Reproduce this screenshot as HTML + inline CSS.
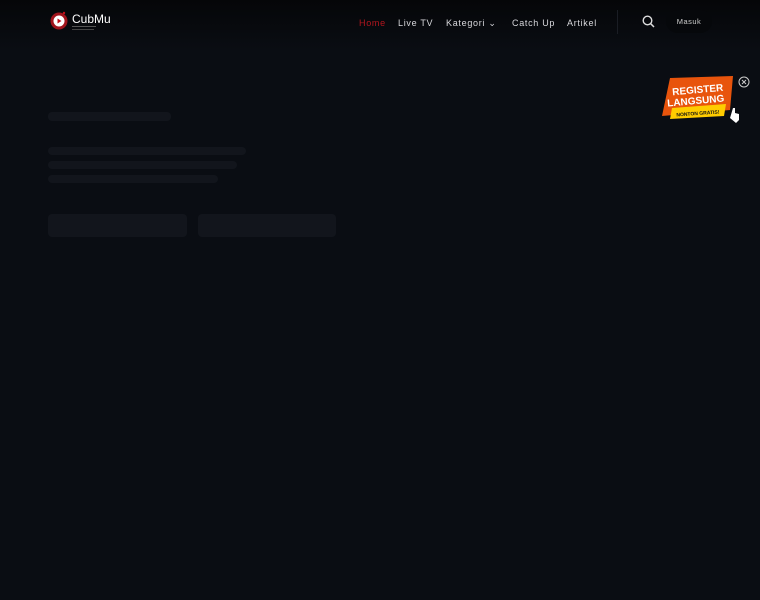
<!DOCTYPE html>
<html><head><meta charset="utf-8"><style>
*{margin:0;padding:0;box-sizing:border-box}
body{width:760px;height:600px;background:#0a0d13;font-family:"Liberation Sans",sans-serif;position:relative;overflow:hidden}
.hdr{position:absolute;left:0;top:0;width:760px;height:50px;background:linear-gradient(#050608,#0a0d13)}
.nav{position:absolute;top:18px;font-size:9px;letter-spacing:.7px;color:#d8d8dc}
.b{position:absolute;background:#12151c;border-radius:4px}
</style></head><body>
<div class="hdr"></div>
<svg style="position:absolute;left:49px;top:10px" width="20" height="20" viewBox="0 0 20 20"><circle cx="10" cy="11" r="8.5" fill="#a0141c"/><circle cx="10" cy="11" r="5.5" fill="#fff"/><path d="M8.5 8.5v5l4-2.5z" fill="#c0101a"/><circle cx="15" cy="3" r="1.2" fill="#c0101a"/></svg>
<div style="position:absolute;left:72px;top:12px;color:#fff;font-size:12px">CubMu</div>
<div style="position:absolute;left:72px;top:26px;width:24px;height:1px;background:#555"></div>
<div style="position:absolute;left:72px;top:29px;width:22px;height:1px;background:#444"></div>
<div class="nav" style="left:359px;color:#b5161e">Home</div>
<div class="nav" style="left:398px">Live TV</div>
<div class="nav" style="left:446px">Kategori ⌄</div>
<div class="nav" style="left:512px">Catch Up</div>
<div class="nav" style="left:567px">Artikel</div>
<div style="position:absolute;left:617px;top:10px;width:1px;height:24px;background:#1a1d24"></div>
<svg style="position:absolute;left:642px;top:15px" width="13" height="13" viewBox="0 0 13 13"><circle cx="5.5" cy="5.5" r="4.3" stroke="#ddd" stroke-width="1.4" fill="none"/><path d="M8.7 8.7L12 12" stroke="#ddd" stroke-width="1.5"/></svg>
<div style="position:absolute;left:666px;top:10px;width:46px;height:23px;border-radius:12px;background:#06080b;color:#ccc;font-size:7.5px;text-align:center;line-height:23px;letter-spacing:.5px">Masuk</div>
<svg style="position:absolute;left:660px;top:74px" width="92" height="52" viewBox="0 0 92 52">
<polygon points="10,4 73,2 70,36 2,42" fill="#e8540c"/>
<polygon points="12,34 66,30 64,42 10,45" fill="#ffcc00"/>
<text x="38" y="19" text-anchor="middle" font-family="Liberation Sans" font-weight="bold" font-size="10" fill="#fff" transform="rotate(-5 38 19)">REGISTER</text>
<text x="36" y="30" text-anchor="middle" font-family="Liberation Sans" font-weight="bold" font-size="10" fill="#fff" transform="rotate(-5 36 30)">LANGSUNG</text>
<text x="38" y="41" text-anchor="middle" font-family="Liberation Sans" font-weight="bold" font-size="5" fill="#111" transform="rotate(-4 38 41)">NONTON GRATIS!</text>
<circle cx="84" cy="8" r="5" fill="none" stroke="#ccc" stroke-width="1"/><path d="M82 6l4 4M86 6l-4 4" stroke="#ccc" stroke-width="1"/>
<path d="M70 44l3-10 2 0 0 5 4 1 0 6-3 3z" fill="#fff"/>
</svg>
<div class="b" style="left:48px;top:112px;width:123px;height:9px"></div>
<div class="b" style="left:48px;top:147px;width:198px;height:8px"></div>
<div class="b" style="left:48px;top:161px;width:189px;height:8px"></div>
<div class="b" style="left:48px;top:175px;width:170px;height:8px"></div>
<div class="b" style="left:48px;top:214px;width:139px;height:23px"></div>
<div class="b" style="left:198px;top:214px;width:138px;height:23px"></div>
</body></html>
